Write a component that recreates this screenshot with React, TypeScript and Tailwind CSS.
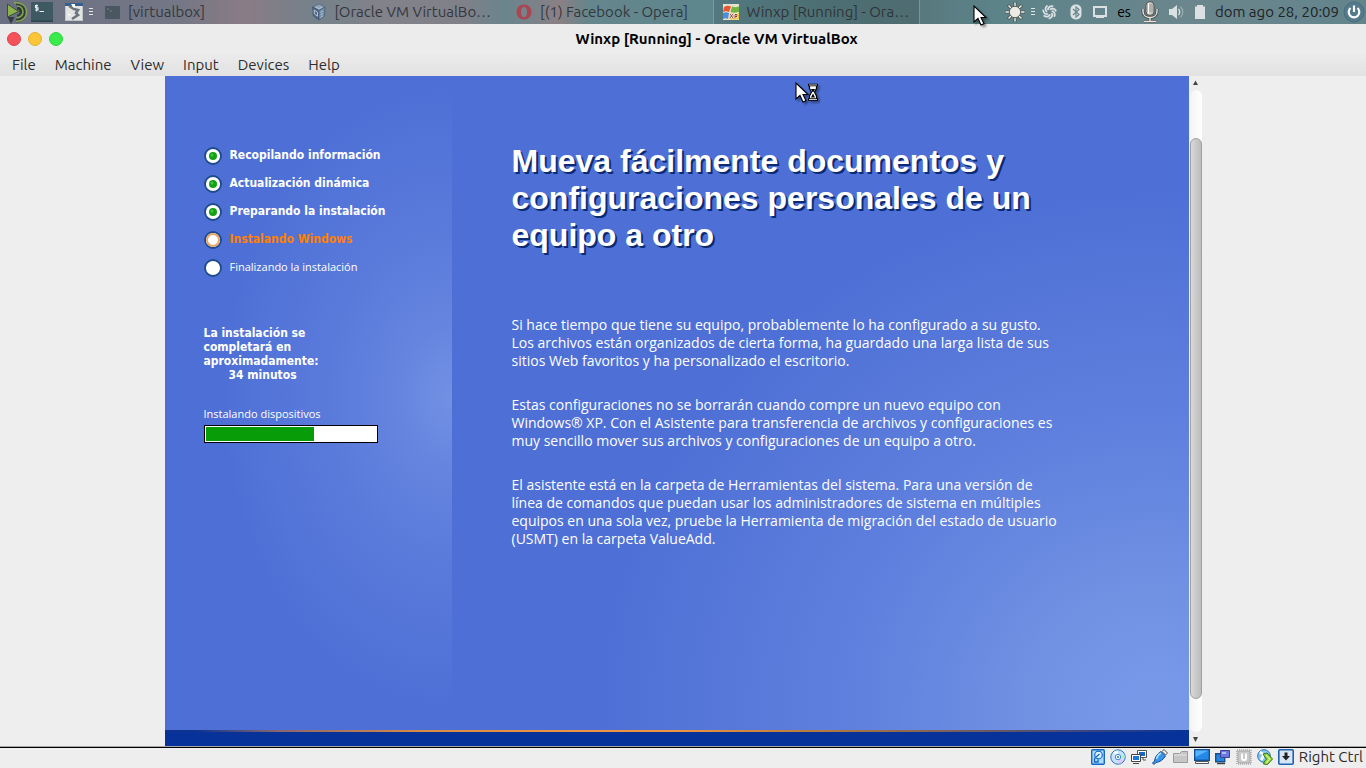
import type { ReactNode } from "react";

const UI = "font-['Ubuntu','Noto_Sans',sans-serif]";

function LauncherLogo() {
  return (
    <svg width="24" height="24" viewBox="0 0 24 24" fill="none">
      <g stroke="#2f3d35" strokeWidth="4">
        <path d="M10 3.5a8.5 8.5 0 0 1 9 8.500a8.500 8.500 0 0 1-9 8.500" />
        <path d="M11 7.500a4.500 4.500 0 0 1 0 9" />
      </g>
      <g stroke="#86a55a" strokeWidth="1.600">
        <path d="M8 2.800c7-1 12.500 3 12.500 9.200s-5.500 10-10.500 9.200" />
        <path d="M11 6c4 0 6 3 6 6s-3 6-6.500 5.600" />
      </g>
      <path d="M1.500 4v13L12.500 11.500z" fill="#8bb04c" stroke="#39502f" />
      <path d="M1.500 17h7l-3.500 7z" fill="#333b40" />
    </svg>
  );
}

function TerminalIcon() {
  return (
    <svg width="22" height="20" viewBox="0 0 22 20">
      <rect width="22" height="20" rx="1" fill="#3f5963" />
      <rect y="18.500" width="22" height="1.500" fill="#2f454e" />
      <path d="M7 3.600H4.500v2.200H7V8H4M5.700 2.500v7M8.500 9.500h4.500" stroke="#e6edef" strokeWidth="1.100" fill="none" />
    </svg>
  );
}

function TornPageIcon() {
  return (
    <svg width="18" height="18" viewBox="0 0 18 18">
      <rect x=".5" y=".5" width="17" height="17" fill="#e2e4e4" stroke="#bfc5c8" />
      <rect width="18" height="3" fill="#365f91" />
      <path d="M4 3l5 3 4 1-2 3 2 2-6 4" fill="none" stroke="#6d757b" strokeWidth="2.600" />
      <path d="M6 1h4v4L8 4zM3 10l3 2-2 1z" fill="#fff" />
    </svg>
  );
}

function Grip() {
  return (
    <svg width="5" height="8" viewBox="0 0 5 8" fill="#dfe4e6">
      <path d="M0 0h4v1H0zM0 3h4v1H0zM0 6h4v1H0z" />
    </svg>
  );
}

function BoxIcon() {
  return (
    <svg width="16" height="18" viewBox="0 0 16 18">
      <path d="M8 1l6 3-6 3.500L1.500 4z" fill="#91a2b7" stroke="#526680" strokeWidth=".7" />
      <path d="M1.500 4L8 7.500V17l-5.500-4z" fill="#52698a" stroke="#3b506d" strokeWidth=".7" />
      <path d="M14 4L8 7.500V17l5.500-4z" fill="#738ca9" stroke="#465c78" strokeWidth=".7" />
      <path d="M3 7l3.500 2.200v4L3.500 11zM9.500 9.500L12 8M9.500 12L12 10.500M9.500 14.500l2.500-1.700M5 4l3 1.600L11 4" stroke="#b5c3d3" fill="none" />
    </svg>
  );
}

function OperaIcon() {
  return (
    <svg width="16" height="16" viewBox="0 0 16 16">
      <path fillRule="evenodd" fill="#aa4653" d="M8 .5C3.500.5.500 3.800.500 8s3 7.500 7.500 7.500 7.500-3.300 7.500-7.500S12.500.5 8 .5zm0 2.200c1.900 0 3 2.200 3 5.300s-1.100 5.300-3 5.300S5 11.100 5 8s1.100-5.300 3-5.300z" />
    </svg>
  );
}

function XpIcon() {
  return (
    <svg width="16" height="16" viewBox="0 0 16 16">
      <rect width="16" height="16" fill="#e6e2d0" />
      <path d="M1 3c3-2 5-1.500 7-.5L6 8C4 7 2 7 0 8z" fill="#e8552e" />
      <path d="M9 2.500c2 1 4 1 7 0V8c-3 1-6 1-8.500 0z" fill="#71b63f" />
      <path d="M0 9c2-1 4-1 6 0l-1 6c-2-1-3-1-5 0z" fill="#4c8ed8" />
      <path d="M7 9c3 1 6 1 9 0v6c-3 1-7 1-10 0z" fill="#f0c63f" />
      <path d="M7 10l3 4M10 10l-3 4M12 14.500v-4h2v2h-2" stroke="#fff" strokeWidth="2" fill="none" />
      <path d="M7 10l3 4M10 10l-3 4M12 14.500v-4h2v2h-2" stroke="#8a3f35" fill="none" />
    </svg>
  );
}

function TaskButton({ icon, label, active }: { icon: ReactNode; label: string; active?: boolean }) {
  return (
    <button
      className={
        active
          ? "flex h-6 min-w-0 flex-1 items-center gap-2 border-x border-white/25 bg-black/10 px-[9px] text-left whitespace-nowrap text-[#303438]"
          : "flex h-6 min-w-0 flex-1 items-center gap-2 px-[9px] text-left whitespace-nowrap text-[#34383e]"
      }
    >
      <span className="shrink-0">{icon}</span>
      <span>{label}</span>
    </button>
  );
}

function Sun() {
  return (
    <svg width="20" height="20" viewBox="0 0 20 20">
      <g stroke="#4b5454" strokeWidth="3"><path d="M10 0v20M0 10h20M3 3l14 14M17 3L3 17" /></g>
      <g stroke="#f6f4ee" strokeWidth="1.400"><path d="M10 .5v19M.5 10h19M3.500 3.500l13 13M16.500 3.500l-13 13" /></g>
      <circle cx="10" cy="10" r="5.700" fill="#eceae5" stroke="#59615f" />
    </svg>
  );
}

function Swirl() {
  return (
    <svg width="15" height="16" viewBox="0 0 16 16" fill="none" stroke="#dbe0e2" strokeWidth="1.900">
      {[0, 51, 103, 154, 206, 257, 309].map((a) => (
        <path key={a} d="M6.500 6C6 3.500 8.500 1 12 2" transform={`rotate(${a} 8 8)`} />
      ))}
    </svg>
  );
}

function Bluetooth() {
  return (
    <svg width="14" height="16" viewBox="0 0 14 16">
      <rect x="1.500" y=".5" width="11" height="15" rx="5" fill="#dbe0e2" />
      <path d="M4 5l6 5.500L7 13V3l3 2.500L4 11" fill="none" stroke="#60838a" strokeWidth="1.100" />
    </svg>
  );
}

function Display() {
  return (
    <svg width="14" height="14" viewBox="0 0 14 14">
      <path d="M1 2h12v9H1z" fill="none" stroke="#dbe0e2" strokeWidth="2" />
      <path d="M3 11h8v2H3z" fill="#dbe0e2" />
    </svg>
  );
}

function Microphone() {
  return (
    <svg width="18" height="22" viewBox="0 0 18 22" fill="none">
      <path d="M2 8v2.500c0 8 14 8 14 0V8M9 16v4M3 20.500h12" stroke="#454c4b" strokeWidth="3" />
      <path d="M2 8v2.500c0 8 14 8 14 0V8M9 16v4M3 20.500h12" stroke="#e8e4dc" strokeWidth="1.400" />
      <rect x="5" y=".5" width="8" height="14" rx="4" fill="#c9c7c2" stroke="#52504c" />
      <path d="M6 4h6M6 6h6M6 8h6M6 10h6" stroke="#8e8b86" strokeWidth=".8" />
      <path d="M7.500 2v11" stroke="#fff" strokeWidth="1.200" />
    </svg>
  );
}

function Speaker() {
  return (
    <svg width="16" height="14" viewBox="0 0 16 14" fill="none">
      <path d="M0 4h3l5-4v14l-5-4H0z" fill="#dbe0e2" />
      <path d="M9.500 4c1.500 1.500 1.500 4.500 0 6" stroke="#dbe0e2" strokeWidth="1.400" />
      <path d="M11.500 1.500c3 3 3 8 0 11" stroke="#92a9ad" strokeWidth="1.500" />
    </svg>
  );
}

function Battery() {
  return (
    <svg width="10" height="14" viewBox="0 0 10 14" fill="#dbe0e2"><path d="M2 0h6v1.500h2V14H0V1.500h2z" /></svg>
  );
}

function Power() {
  return (
    <svg width="22" height="22" viewBox="0 0 22 22" fill="none">
      <circle cx="11" cy="11" r="10" fill="#537a8d" stroke="#4b6d7c" />
      <path d="M7.500 7a5.300 5.300 0 1 0 7 0M11 4.500v6.500" stroke="#fff" strokeWidth="2.200" />
    </svg>
  );
}

const arrow = "M1 1v16l4-3.500 3 6.500 3-1.300-3-6.200h5z";

function Cursor({ busy }: { busy?: boolean }) {
  return (
    <svg width="26" height="23" viewBox="0 0 26 23" className="drop-shadow-[2px_2px_1px_rgba(0,0,0,0.4)]">
      <path d={arrow} fill="#fff" stroke="#000" strokeWidth="1.100" />
      {busy && (
        <g>
          <path d="M14.500 3h7v3.500L19.500 10l2 4v3.500h-7V14l2-4-2-3.500z" fill="#fff" stroke="#000" strokeWidth="1.200" />
          <path d="M13 3h10M13 17.500h10" stroke="#000" strokeWidth="2.600" />
          <path d="M14 3h8M14 17.500h8" stroke="#fff" strokeWidth=".8" />
          <path d="M16 7h4l-1.500 3h-1zM18 11.500l2 4h-4z" fill="#000" />
        </g>
      )}
    </svg>
  );
}

type StepState = "done" | "current" | "pending";
const steps: { label: string; state: StepState }[] = [
  { label: "Recopilando información", state: "done" },
  { label: "Actualización dinámica", state: "done" },
  { label: "Preparando la instalación", state: "done" },
  { label: "Instalando Windows", state: "current" },
  { label: "Finalizando la instalación", state: "pending" },
];

const stepText: Record<StepState, string> = {
  done: "font-['DejaVu_Sans_Condensed','DejaVu_Sans',sans-serif] text-xs font-bold text-white",
  current: "font-['DejaVu_Sans_Condensed','DejaVu_Sans',sans-serif] text-xs font-bold text-[#ff8000]",
  pending: "font-['Open_Sans','Noto_Sans',sans-serif] text-[11px] text-white",
};

function Bullet({ state }: { state: StepState }) {
  return (
    <svg width="18" height="20" viewBox="0 0 18 20">
      <circle cx="9" cy="11" r="8" fill="#fff" stroke="#1b4b8c" strokeWidth="1.800" />
      {state === "done" && (
        <g>
          <circle cx="9" cy="11" r="4" fill="#13a013" />
          <circle cx="8" cy="10" r="1.500" fill="#45bf45" />
        </g>
      )}
      {state === "current" && <circle cx="9" cy="11" r="6" fill="#fff" stroke="#eaa468" strokeWidth="2" />}
    </svg>
  );
}

const blue = "#1668c8";

function StatusIcons() {
  return (
    <>
      <svg width="14" height="16" viewBox="0 0 14 16">
        <rect x=".7" y=".7" width="12.600" height="14.600" rx="1" fill="#a9dcfb" stroke={blue} strokeWidth="1.400" />
        <circle cx="7.500" cy="6" r="3.800" fill="#dff3ff" stroke={blue} strokeWidth="1.200" />
        <path d="M8.500 5L3.500 9.500v3.500h3.500v-2.500" fill="none" stroke={blue} strokeWidth="1.300" />
      </svg>
      <svg width="16" height="16" viewBox="0 0 16 16">
        <circle cx="8" cy="8" r="7.200" fill="#c5e3fb" stroke="#2b75c4" />
        <path d="M8 8L3 3.500A7 7 0 0 1 8 1.500z" fill="#f5fcff" />
        <path d="M8 8l5 4.500A7 7 0 0 1 8 14.500z" fill="#e0c8f4" />
        <path d="M8 8l6-3a7 7 0 0 1 .5 4z" fill="#b9f1c5" />
        <circle cx="8" cy="8" r="2.700" fill="#fff" stroke="#4189d2" />
        <circle cx="8" cy="8" r="1" fill="#2870bd" />
      </svg>
      <svg width="16" height="16" viewBox="0 0 16 16">
        <path d="M6.500 1.500h9v7h-9z" fill="#fff" stroke="#555" />
        <path d="M8 3h6v4H8z" fill={blue} />
        <path d="M12 9v2h3" stroke="#555" fill="none" />
        <path d="M.5 5.500h9v7h-9z" fill="#fff" stroke="#444" />
        <path d="M2 7h6v4H2z" fill="#1b79dc" />
        <path d="M2 14.500h6" stroke="#444" />
      </svg>
      <svg width="16" height="16" viewBox="0 0 16 16">
        <path d="M10 2.500l2-2 3.500 3.500-2 2z" fill="#eee" stroke="#555" />
        <path d="M9 2.500L13.500 7C11 11 8 13 4 13.500L2 15.500.500 14l2-2C3 8 5 5 9 2.500z" fill="#3695e9" stroke="#174f91" />
        <path d="M4.500 10c.5-2.500 2-4.500 4.500-6" stroke="#a8ddff" strokeWidth="1.500" fill="none" />
      </svg>
      <svg width="16" height="16" viewBox="0 0 16 16">
        <path d="M.5 13.500v-9h6l2-2h6v11z" fill="#c6c6c6" stroke="#9b9b9b" />
        <path d="M1 6h13" stroke="#e5e5e5" />
      </svg>
      <svg width="16" height="16" viewBox="0 0 16 16">
        <rect x=".7" y=".7" width="14.600" height="10.600" fill="#2389e8" stroke="#174f91" strokeWidth="1.400" />
        <path d="M1.500 1.500h13L1.500 8z" fill="#58b3ff" />
        <path d="M1.500 12.500h13v2h-13z" fill="#fff" stroke="#555" />
      </svg>
      <svg width="16" height="16" viewBox="0 0 16 16">
        <path d="M.7 4.700h9v8h-9z" fill="#2685df" stroke="#174f91" strokeWidth="1.400" />
        <path d="M2 14.500h8" stroke="#444" strokeWidth="1.500" />
        <path d="M5.500 1.500h9v7h-9z" fill="#6b78dc" stroke="#3e419b" />
        <path d="M7 3h4v2H7z" fill="#aebcff" />
      </svg>
      <svg width="16" height="16" viewBox="0 0 16 16">
        <rect x="1" y="1" width="14" height="14" fill="none" stroke="#bbb" strokeWidth="2" strokeDasharray="1 1" />
        <rect x="2" y="2" width="12" height="12" rx="1" fill="#cacaca" stroke="#a5a5a5" />
        <path d="M6 4.500v5c0 2 4 2 4 0v-5" fill="none" stroke="#fff" strokeWidth="1.800" />
      </svg>
      <svg width="16" height="16" viewBox="0 0 16 16">
        <circle cx="7" cy="7" r="6.300" fill="#89c9f3" stroke="#246fae" />
        <path d="M3 3l4 3-3 5" stroke="#fff" strokeWidth="2.500" fill="none" />
        <path d="M6 5l4-1 5.500 6-5 5.500-4-.5 1-3 2-1.500z" fill="#92d437" stroke="#32751c" />
        <path d="M9 6l4 4-4 4" stroke="#d4f58c" strokeWidth="1.200" fill="none" />
      </svg>
      <svg width="16" height="16" viewBox="0 0 16 16">
        <rect x=".8" y=".8" width="14.400" height="14.400" rx="1" fill="#d7e6f7" stroke="#1d63b2" strokeWidth="1.600" />
        <path d="M6.500 3.500h3V7H12l-4 4.500L4 7h2.500z" fill="#222" />
      </svg>
    </>
  );
}

export default function App() {
  return (
    <div className={`relative flex min-h-screen flex-col bg-[#eeeeee] text-[15px] ${UI}`}>
      <header className="flex h-6 items-center bg-[linear-gradient(90deg,#6a7082_0%,#747785_13%,#8a7c86_18%,#74818a_23%,#82828a_28%,#808089_34%,#69858d_37%,#8b8084_41%,#65868c_43%,#5c868d_53%,#557c80_60%,#58797e_67%,#5b8388_73%,#6b868d_87%,#63848b_100%)]">
        <div className="flex w-24 shrink-0 items-center pl-1.5">
          <button aria-label="Menú"><LauncherLogo /></button>
          <button aria-label="Terminal" className="ml-px"><TerminalIcon /></button>
          <button aria-label="Editor" className="ml-3"><TornPageIcon /></button>
          <span className="ml-1.5"><Grip /></span>
        </div>
        <nav className="flex min-w-0 max-w-[824px] flex-1 leading-6">
          <TaskButton
            label="[virtualbox]"
            icon={<svg width="15" height="13" viewBox="0 0 15 13"><rect width="15" height="13" rx="1" fill="#4a5761" /><path d="M2 3h2M5 5h2" stroke="#75828b" /></svg>}
          />
          <TaskButton label="[Oracle VM VirtualBo…" icon={<BoxIcon />} />
          <TaskButton label="[(1) Facebook - Opera]" icon={<OperaIcon />} />
          <TaskButton label="Winxp [Running] - Ora…" icon={<XpIcon />} active />
        </nav>
        <div className="ml-auto flex shrink-0 items-center gap-2.5 pr-px text-[#1e2326]">
          <span className="flex items-center gap-1.5"><Sun /><Grip /></span>
          <span className="-ml-1 mr-0.5"><Swirl /></span>
          <Bluetooth />
          <Display />
          <span className="text-sm text-black">es</span>
          <Microphone />
          <Speaker />
          <Battery />
          <span className="flex items-center gap-1">
            <time>dom ago 28, 20:09</time>
            <button aria-label="Apagar"><Power /></button>
          </span>
        </div>
      </header>

      <div className="grid h-[30px] grid-cols-[1fr_auto_1fr] items-center bg-[#ececec] px-[7px]">
        <div className="flex gap-[7px]">
          <button aria-label="Cerrar" className="size-3.5 rounded-full border border-[#e2424c] bg-[#f5515b]" />
          <button aria-label="Minimizar" className="size-3.5 rounded-full border border-[#e8b02e] bg-[#fac536]" />
          <button aria-label="Maximizar" className="size-3.5 rounded-full border border-[#2fd543] bg-[#39ea4b]" />
        </div>
        <h1 className="pl-[67px] font-bold text-black">Winxp [Running] - Oracle VM VirtualBox</h1>
      </div>

      <nav className="flex h-[22px] items-center gap-[19px] bg-linear-to-b from-[#ebebeb] to-[#e2e2e2] px-3 text-[#2c2c2c]">
        <button>File</button>
        <button>Machine</button>
        <button>View</button>
        <button>Input</button>
        <button>Devices</button>
        <button>Help</button>
      </nav>

      <div className="flex flex-1 justify-center">
        <div className="flex w-full max-w-[1037px]">
          <div className="flex flex-1 flex-col bg-[#4e70d6] text-white">
            <div className="flex flex-1">
              <aside className="w-[287px] shrink-0 bg-[radial-gradient(ellipse_230px_310px_at_100%_49%,#7291e4_0%,#6685df_22%,#5a7adb_55%,#4e70d6_100%)] pt-[65px] pl-[39px]">
                <ol>
                  {steps.map((s) => (
                    <li key={s.label} className="flex h-7 items-center gap-2">
                      <Bullet state={s.state} />
                      <span className={stepText[s.state]}>{s.label}</span>
                    </li>
                  ))}
                </ol>
                <p className="mt-[45px] font-['DejaVu_Sans_Condensed','DejaVu_Sans',sans-serif] text-xs leading-[14px] font-bold">
                  La instalación se<br />completará en<br />aproximadamente:
                  <span className="block pl-[25px]">34 minutos</span>
                </p>
                <div className="mt-6 font-['Open_Sans','Noto_Sans',sans-serif] text-[11px] leading-4">
                  <p id="task">Instalando dispositivos</p>
                  <div
                    role="progressbar"
                    aria-labelledby="task"
                    aria-valuenow={64}
                    className="mt-[3px] h-[18px] w-[174px] border border-black bg-white p-px"
                  >
                    <div className="h-full bg-[#089c08]" style={{ width: "64%" }} />
                  </div>
                </div>
              </aside>
              <main className="flex-1 bg-[radial-gradient(ellipse_560px_520px_at_96%_97%,#7999e8_0%,#7090e3_25%,#5f80dd_55%,#4e70d6_100%)] pt-[67px] pl-[60px]">
                <h2 className="font-['Liberation_Sans',Arial,sans-serif] text-[32px] leading-[37px] font-bold text-shadow-[2px_2px_0_#0b2a70]">
                  Mueva fácilmente documentos y<br />configuraciones personales de un<br />equipo a otro
                </h2>
                <div className="mt-[62px] flex flex-col gap-[26px] font-['Open_Sans','Noto_Sans',sans-serif] text-sm leading-[18px]">
                  <p>
                    Si hace tiempo que tiene su equipo, probablemente lo ha configurado a su gusto.<br />
                    Los archivos están organizados de cierta forma, ha guardado una larga lista de sus<br />
                    sitios Web favoritos y ha personalizado el escritorio.
                  </p>
                  <p>
                    Estas configuraciones no se borrarán cuando compre un nuevo equipo con<br />
                    Windows® XP. Con el Asistente para transferencia de archivos y configuraciones es<br />
                    muy sencillo mover sus archivos y configuraciones de un equipo a otro.
                  </p>
                  <p>
                    El asistente está en la carpeta de Herramientas del sistema. Para una versión de<br />
                    línea de comandos que puedan usar los administradores de sistema en múltiples<br />
                    equipos en una sola vez, pruebe la Herramienta de migración del estado de usuario<br />
                    (USMT) en la carpeta ValueAdd.
                  </p>
                </div>
              </main>
            </div>
            <div className="h-4 bg-[#06329a]">
              <div className="h-0.5 bg-[linear-gradient(90deg,#0d338f_0%,#0d338f_3%,#8a6670_11%,#d98b45_25%,#ee9440_40%,#ee9440_50%,#b0783f_65%,#555070_85%,#06329a_100%)]" />
            </div>
          </div>
          <div className="flex w-[13px] flex-col items-end bg-[#eeeeee]">
            <svg width="12" height="14" viewBox="0 0 12 14"><path d="M5.500 4.500L8 9H3z" fill="#444" /></svg>
            <div className="flex w-3 flex-1 flex-col rounded-full bg-linear-to-r from-[#f4f4f4] to-white pt-12">
              <div className="h-[561px] w-3 rounded-full border border-[#a0a0a0] bg-linear-to-r from-[#d9d9d9] to-[#bcbcbc]" />
            </div>
            <svg width="12" height="14" viewBox="0 0 12 14"><path d="M5.500 10L8 5H3z" fill="#444" /></svg>
          </div>
        </div>
      </div>

      <footer className="flex h-[22px] items-center justify-end gap-[5px] border-t border-[#a5a5a5] pr-[3px] pb-px text-[#2c2c2c] shadow-[inset_0_1px_0_#000]">
        <StatusIcons />
        <span>Right Ctrl</span>
      </footer>

      <div className="pointer-events-none absolute top-[5px] left-[973px]"><Cursor /></div>
      <div className="pointer-events-none absolute top-[82px] left-[795px]"><Cursor busy /></div>
    </div>
  );
}
